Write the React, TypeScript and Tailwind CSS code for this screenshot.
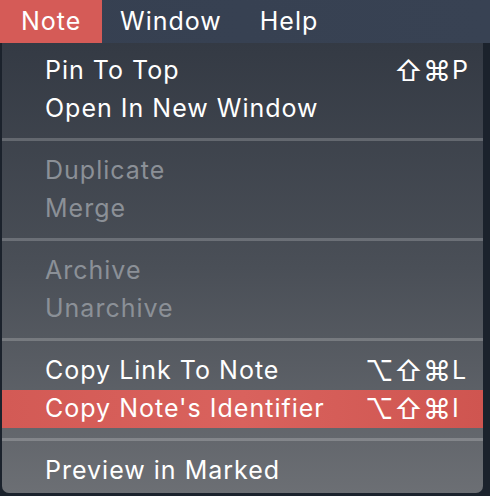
import React from 'react';

type Item = { label: string; mods?: string[]; keyChar?: string; disabled?: boolean; active?: boolean };

const groups: Item[][] = [
  [{ label: 'Pin To Top', mods: ['⇧', '⌘'], keyChar: 'P' }, { label: 'Open In New Window' }],
  [{ label: 'Duplicate', disabled: true }, { label: 'Merge', disabled: true }],
  [{ label: 'Archive', disabled: true }, { label: 'Unarchive', disabled: true }],
  [
    { label: 'Copy Link To Note', mods: ['⌥', '⇧', '⌘'], keyChar: 'L' },
    { label: "Copy Note's Identifier", mods: ['⌥', '⇧', '⌘'], keyChar: 'I', active: true },
  ],
  [{ label: 'Preview in Marked' }],
];

const font = { fontFamily: 'Inter, "DejaVu Sans", sans-serif' };

const Row = ({ item }: { item: Item }) => (
  <div
    className={`flex h-[38px] items-center justify-between pl-[43px] pr-[9px] text-[25px] tracking-[1px] ${
      item.disabled ? 'text-[#8b9097]' : 'text-white'
    } ${item.active ? 'bg-gradient-to-r from-[#d35a55] via-[#d9625d] to-[#cf5550]' : ''}`}
  >
    <span>{item.label}</span>
    {item.keyChar && (
      <span className="flex items-center">
        {item.mods?.map((m) => (
          <span key={m} className="w-[29px] text-[28px] leading-none tracking-normal">
            {m}
          </span>
        ))}
        <span className="w-[22px] tracking-normal">{item.keyChar}</span>
      </span>
    )}
  </div>
);

const App = () => {
  return (
    <div className="h-[496px] w-[490px] overflow-hidden bg-[#1b222c]" style={font}>
      {/* Menu bar */}
      <div className="flex h-[43px] items-center bg-gradient-to-r from-[#364051] to-[#384253] text-[25px] tracking-[1px] text-white">
        <div className="flex h-full w-[102px] items-center pl-[21px] bg-[#d55b57]">Note</div>
        <div className="pl-[18px]">Window</div>
        <div className="pl-[38px]">Help</div>
      </div>

      {/* Dropdown */}
      <div className="ml-[2px] w-[481px] rounded-b-[7px] bg-gradient-to-b from-[#343a44] via-[#4a4f57] to-[#6c6f74] pt-[9px] pb-[3px]">
        {groups.map((group, i) => (
          <div key={i}>
            {i > 0 && <div className="mt-[10px] mb-[11px] h-[3px] bg-white/20" />}
            {group.map((item) => (
              <Row key={item.label} item={item} />
            ))}
          </div>
        ))}
      </div>
    </div>
  );
};

export default App;
